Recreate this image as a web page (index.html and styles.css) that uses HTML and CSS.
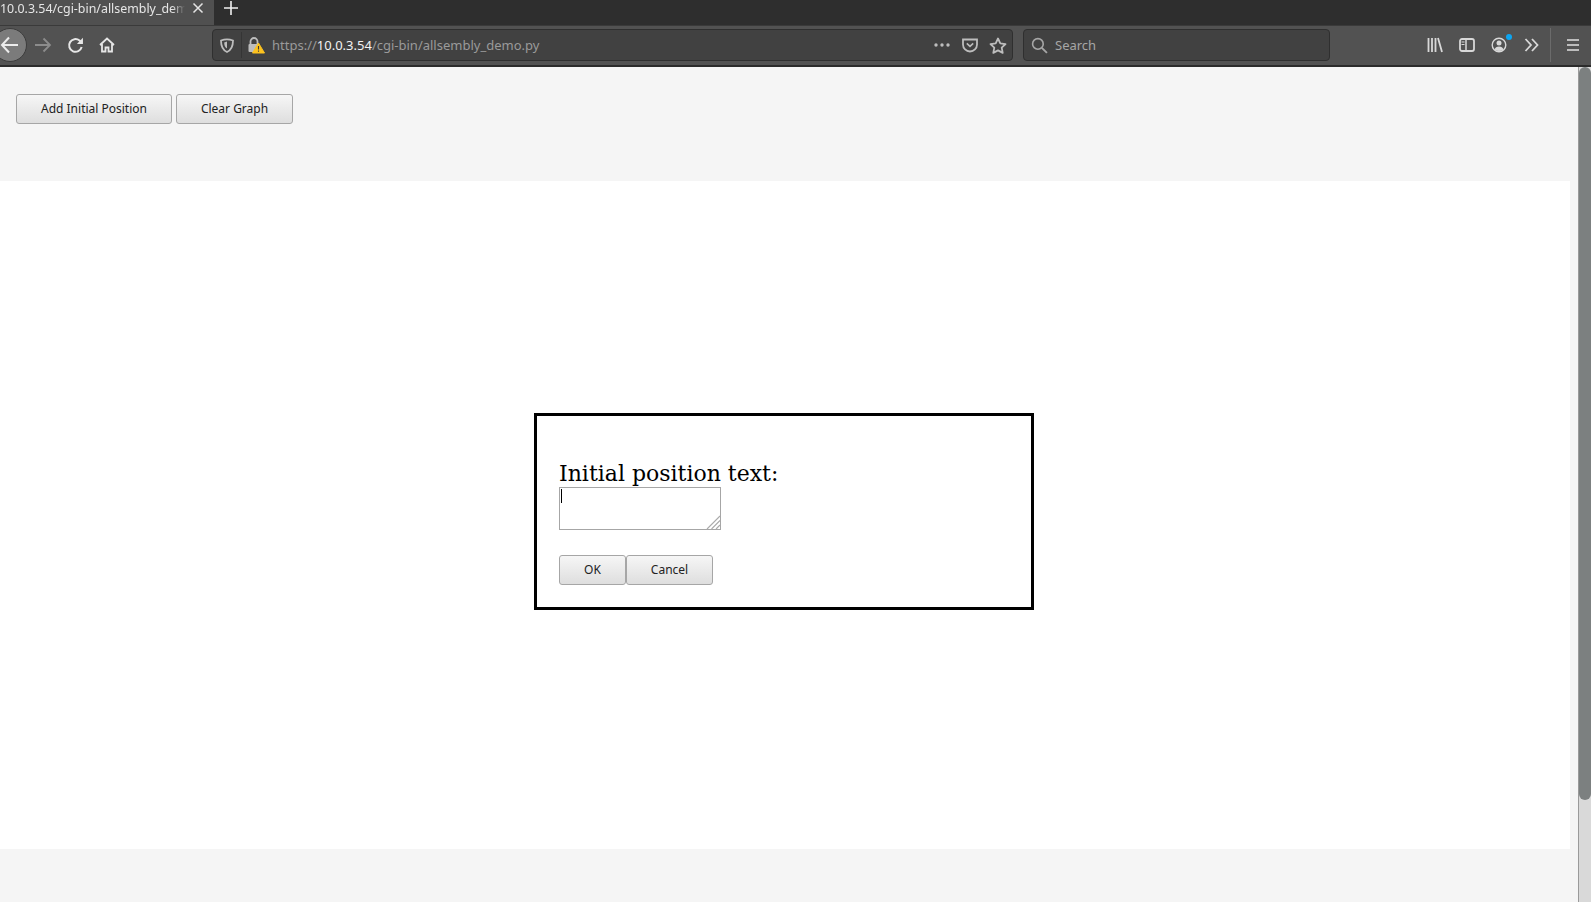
FILE: index.html
```html
<!DOCTYPE html>
<html>
<head>
    <title>Allsembly demo</title>
    <link rel="stylesheet" href="styles.css">
</head>
<body>
    <header class="browser">
        <div class="tabstrip">
            <div class="tab">
                <span class="tab-title">10.0.3.54/cgi-bin/allsembly_demo</span>
                <svg class="tab-close" width="12" height="12" viewBox="0 0 12 12"><path d="M1.5 1.5l9 9M10.5 1.5l-9 9" stroke="#e4e4e4" stroke-width="1.5"/></svg>
            </div>
            <svg class="new-tab" width="16" height="16" viewBox="0 0 16 16"><path d="M8 1v14M1 8h14" stroke="#f0f0f0" stroke-width="1.6"/></svg>
        </div>
        <div class="toolbar">
            <svg class="back" width="28" height="36" viewBox="0 0 28 36">
                <circle cx="10" cy="18" r="16.5" fill="#7b7b7b" stroke="#3c3c3c"/>
                <path d="M2 18h16M9 10.5L2 18l7 7.5" fill="none" stroke="#ececec" stroke-width="2"/>
            </svg>
            <button class="tool" type="button">
                <svg width="18" height="16" viewBox="0 0 18 16"><path d="M1 8h15M9.500 1.500L16 8l-6.500 6.500" fill="none" stroke="#8c8c8c" stroke-width="1.800"/></svg>
            </button>
            <button class="tool" type="button">
                <svg width="17" height="17" viewBox="0 0 16 16"><path d="M13.800 9.500A6 6 0 1 1 11.800 3.300L14 5.200" fill="none" stroke="#e6e6e6" stroke-width="1.900"/><path d="M15 0.800V6.500H9.300z" fill="#e6e6e6"/></svg>
            </button>
            <button class="tool tool-home" type="button">
                <svg width="16" height="16" viewBox="0 0 16 16"><path d="M1 8l7-6.500L15 8M3 7v7.500h3.500v-4h3v4H13V7" fill="none" stroke="#e6e6e6" stroke-width="1.800"/></svg>
            </button>

            <div class="urlbar">
                <svg class="shield" width="14" height="15" viewBox="0 0 14 15"><path d="M1 2.500Q7 0.200 13 2.500C13 8 11.500 12 7 14C2.500 12 1 8 1 2.500z" fill="none" stroke="#bdbdbd" stroke-width="1.800"/><path d="M7 3.500v7C5 9.500 4.200 7 4.200 4.400z" fill="#bdbdbd"/></svg>
                <span class="url-sep"></span>
                <svg class="lock" width="18" height="18" viewBox="0 0 18 18">
                    <path d="M3.500 8V5.500a3.500 3.500 0 0 1 7 0V8" fill="none" stroke="#bdbdbd" stroke-width="1.800"/>
                    <rect x="1.500" y="8" width="10" height="8" rx="1" fill="#bdbdbd"/>
                    <path d="M11.500 7L17.500 17H5.500z" fill="#fcc21f" stroke="#fcc21f" stroke-linejoin="round"/>
                    <path d="M11.500 10v3.500M11.500 14.500v1.200" stroke="#3a3a3a" stroke-width="1.100"/>
                </svg>
                <span class="url-text">https://<b>10.0.3.54</b>/cgi-bin/allsembly_demo.py</span>
                <svg class="dots" width="16" height="4" viewBox="0 0 16 4"><circle cx="2" cy="2" r="1.700" fill="#bdbdbd"/><circle cx="8" cy="2" r="1.700" fill="#bdbdbd"/><circle cx="14" cy="2" r="1.700" fill="#bdbdbd"/></svg>
                <svg class="pocket" width="16" height="16" viewBox="0 0 16 15"><path d="M1 2h14v5a7 7 0 0 1-14 0z" fill="none" stroke="#bdbdbd" stroke-width="1.800"/><path d="M4.800 5.800L8 8.800l3.200-3" fill="none" stroke="#bdbdbd" stroke-width="1.600"/></svg>
                <svg class="star" width="18" height="17" viewBox="0 0 18 17"><path d="M9 1.500l2.300 4.900 5.200.7-3.800 3.600 1 5.200L9 13.400l-4.700 2.500 1-5.200L1.500 7.100l5.200-.7z" fill="none" stroke="#bdbdbd" stroke-width="1.800" stroke-linejoin="round"/></svg>
            </div>

            <div class="searchbar">
                <svg width="17" height="17" viewBox="0 0 16 16"><circle cx="6.500" cy="6.500" r="5" fill="none" stroke="#a6a6a6" stroke-width="1.500"/><path d="M10.200 10.200L15 15" stroke="#a6a6a6" stroke-width="1.800"/></svg>
                <span>Search</span>
            </div>

            <div class="tools-right">
                <svg class="library" width="16" height="16" viewBox="0 0 16 16"><path d="M1.500 1v14M5 1v14M8.500 1v14M11 1l4 14" stroke="#d8d8d8" stroke-width="1.800"/></svg>
                <svg class="sidebar" width="16" height="14" viewBox="0 0 16 14"><rect x="1" y="1" width="14" height="12" rx="2" fill="none" stroke="#d8d8d8" stroke-width="1.800"/><path d="M7 1v12" stroke="#d8d8d8" stroke-width="1.500"/><path d="M2.500 4h3M2.500 6.500h3" stroke="#d8d8d8"/></svg>
                <span class="account">
                    <svg width="16" height="16" viewBox="0 0 16 16"><circle cx="8" cy="8" r="6.800" fill="none" stroke="#d8d8d8" stroke-width="1.400"/><circle cx="8" cy="6" r="2.500" fill="#d8d8d8"/><path d="M3.500 12.500Q4.500 9.500 8 9.500T12.500 12.500Q8 15.500 3.500 12.500z" fill="#d8d8d8"/></svg>
                    <i class="badge"></i>
                </span>
                <svg class="chevrons" width="15" height="14" viewBox="0 0 15 14"><path d="M1.500 1l5.500 6-5.500 6M8 1l5.500 6L8 13" fill="none" stroke="#d8d8d8" stroke-width="1.800"/></svg>
                <span class="tool-sep"></span>
                <svg class="menu" width="14" height="12" viewBox="0 0 14 12"><path d="M1 1h12M1 6h12M1 11h12" stroke="#e0e0e0" stroke-width="1.700"/></svg>
            </div>
        </div>
    </header>

    <div class="viewport">
        <main class="page">
            <div class="controls">
                <button class="btn btn-add" type="button">Add Initial Position</button>
                <button class="btn btn-clear" type="button">Clear Graph</button>
            </div>
            <section class="canvas">
                <form class="dialog">
                    <label class="dialog-label" for="position-text">Initial position text:</label>
                    <div class="field">
                        <textarea id="position-text" class="dialog-input"></textarea>
                        <i class="caret"></i>
                        <svg class="grip" width="15" height="15" viewBox="0 0 15 15"><path d="M14 1L1 14M14 5.500L5.500 14M14 10L10 14" stroke="#ababab" stroke-width="1.100"/></svg>
                    </div>
                    <div class="dialog-actions">
                        <button class="btn btn-ok" type="button">OK</button>
                        <button class="btn btn-cancel" type="button">Cancel</button>
                    </div>
                </form>
            </section>
        </main>
        <div class="scrollbar"><div class="scroll-thumb"></div></div>
    </div>
</body>
</html>
```

FILE: styles.css
```css
* {
    box-sizing: border-box;
}

html, body {
    height: 100%;
}

body {
    margin: 0;
    display: flex;
    flex-direction: column;
    overflow: hidden;
    font-family: "Noto Sans", "Open Sans", sans-serif;
    background: #f5f5f5;
}

/* browser chrome */
.browser {
    flex: none;
    height: 67px;
    display: flex;
    flex-direction: column;
}

.tabstrip {
    height: 25px;
    display: flex;
    align-items: center;
    background: #2e2e2e;
}

.tab {
    width: 214px;
    height: 25px;
    display: flex;
    align-items: center;
    background: #505050;
    color: #e6e6e6;
    font-size: 12.4px;
    position: relative;
}

.tab-title {
    width: 185px;
    overflow: hidden;
    white-space: nowrap;
    padding-bottom: 9px;
    -webkit-mask-image: linear-gradient(to right, #000 172px, transparent 185px);
    mask-image: linear-gradient(to right, #000 172px, transparent 185px);
}

.tab-close {
    margin-left: 7px;
    margin-top: -9px;
}

.new-tab {
    margin-left: 9px;
    margin-top: -9px;
}

.toolbar {
    height: 42px;
    padding-bottom: 1px;
    display: flex;
    align-items: center;
    background: #525252;
    border-top: 1px solid #3a3a3a;
    border-bottom: 2px solid #2b2b2b;
}

.back {
    flex: none;
    width: 28px;
    margin-right: -1px;
}

.tool {
    flex: none;
    width: 32px;
    height: 32px;
    padding: 0;
    border: 0;
    background: none;
    display: flex;
    align-items: center;
    justify-content: center;
}

.urlbar {
    flex: none;
    width: 801px;
    height: 32px;
    margin-left: 89px;
    display: flex;
    align-items: center;
    background: #414141;
    border: 1px solid #2f2f2f;
    border-radius: 4px;
}

.shield {
    margin-left: 7px;
}

.url-sep {
    width: 1px;
    height: 26px;
    margin: 0 5px 0 7px;
    background: #353535;
}

.lock {
    flex: none;
}

.url-text {
    margin-left: 7px;
    flex: 1;
    color: #9a9a9a;
    font-size: 13px;
    white-space: nowrap;
}

.url-text b {
    font-weight: 400;
    color: #f2f2f2;
}

.pocket {
    margin-left: 12px;
}

.star {
    margin: 0 5px 0 11px;
}

.searchbar {
    flex: none;
    width: 307px;
    height: 32px;
    margin-left: 10px;
    padding-left: 7px;
    display: flex;
    align-items: center;
    gap: 7px;
    background: #414141;
    border: 1px solid #2f2f2f;
    border-radius: 4px;
    color: #a6a6a6;
    font-size: 13px;
}

.tools-right {
    flex: 1;
    height: 100%;
    display: flex;
    align-items: center;
    padding-left: 97px;
}

.sidebar {
    margin-left: 16px;
}

.account {
    margin-left: 16px;
    position: relative;
    display: flex;
}

.badge {
    position: absolute;
    top: -3px;
    right: -5px;
    width: 6px;
    height: 6px;
    border-radius: 50%;
    background: #0ca5f2;
}

.chevrons {
    margin-left: 17px;
}

.tool-sep {
    width: 1px;
    height: 34px;
    margin-left: 11px;
    background: #6b6b6b;
}

.menu {
    margin-left: 15px;
}

/* page */
.viewport {
    flex: 1;
    min-height: 0;
    display: flex;
}

.page {
    flex: 1;
    min-width: 0;
    display: flex;
    flex-direction: column;
}

.controls {
    flex: none;
    height: 114px;
    padding: 27px 0 0 16px;
    display: flex;
    align-items: flex-start;
    gap: 4px;
}

.btn {
    height: 30px;
    padding: 0 0 2px;
    border: 1px solid #a6a6a6;
    border-radius: 3px;
    background: linear-gradient(#f6f6f6, #dedede);
    color: #222;
    font-family: "Noto Sans", "Open Sans", sans-serif;
    font-size: 12px;
}

.btn-add {
    width: 156px;
}

.btn-clear {
    width: 117px;
}

.canvas {
    flex: none;
    width: 1570px;
    height: 668px;
    padding: 232px 0 0 534px;
    background: #fff;
}

.dialog {
    width: 500px;
    height: 197px;
    padding: 43px 22px 0;
    border: 3px solid #000;
    background: #fff;
}

.dialog-label {
    display: block;
    height: 28px;
    font-family: "DejaVu Serif", serif;
    font-size: 22px;
    line-height: 30px;
    color: #000;
}

.field {
    position: relative;
    width: 162px;
    height: 43px;
}

.dialog-input {
    display: block;
    width: 162px;
    height: 43px;
    margin: 0;
    padding: 1px;
    border: 1px solid #a6a6a6;
    border-radius: 0;
    outline: none;
    resize: none;
    background: #fff;
}

.caret {
    position: absolute;
    left: 2px;
    top: 2px;
    width: 1px;
    height: 14px;
    background: #000;
}

.grip {
    position: absolute;
    right: 0;
    bottom: 0;
}

.dialog-actions {
    margin-top: 25px;
    display: flex;
}

.btn-ok {
    width: 67px;
}

.btn-cancel {
    width: 87px;
}

.scrollbar {
    flex: none;
    width: 13px;
    margin-left: 8px;
    background: #d9d9d9;
    border-left: 1px solid #9a9a9a;
}

.scroll-thumb {
    height: 733px;
    border-radius: 6px;
    background: #7c8080;
}
```
